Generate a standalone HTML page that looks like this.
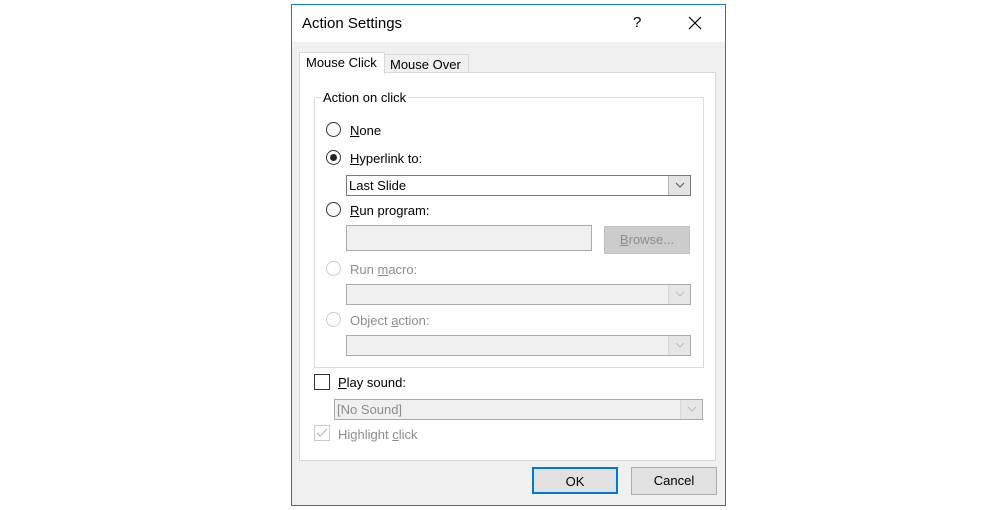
<!DOCTYPE html>
<html><head><meta charset="utf-8"><style>
*{box-sizing:border-box;margin:0;padding:0}
body{width:1000px;height:510px;background:#fff;position:relative;font-family:"Liberation Sans",sans-serif;font-size:13px;color:#000;overflow:hidden}
.a{position:absolute}
.dlg{left:291px;top:4px;width:435px;height:502px;border:1px solid #1979ca;background:#f0f0f0}
.title{left:292px;top:5px;width:433px;height:37px;background:#fff}
.rad{width:15px;height:15px;border:1px solid #333;border-radius:50%;background:#fff}
.rad.d{border-color:#ccc}
.lbl{white-space:nowrap;line-height:15px}
.g{color:#8d8d8d}
u{text-decoration:underline}
.combo{border:1px solid #7a7a7a;background:#fff;height:21px}
.combo.d{border-color:#cfcfcf;background:#f0f0f0}
.arr{position:absolute;right:0;top:0;width:22px;height:100%;background:#e3e3e3;border-left:1px solid #b5b5b5}
.arr.d{background:#e6e6e6;border-left-color:#d6d6d6}
.arr svg{position:absolute;left:6px;top:6px}
.btn{background:#e1e1e1;border:1px solid #adadad;text-align:center;line-height:26px;font-size:13px}
</style></head><body>
<div class="a dlg"></div>
<div class="a title"></div>
<div class="a" style="left:302px;top:15px;font-size:15px">Action Settings</div>
<div class="a" style="left:633px;top:14px;font-size:15px">?</div>
<svg class="a" style="left:688px;top:16px" width="14" height="14"><path d="M1 1L13 13M13 1L1 13" stroke="#000" stroke-width="1.2"/></svg>
<div class="a" style="left:384px;top:54px;width:85px;height:19px;background:#f0f0f0;border:1px solid #d9d9d9;border-bottom:none"></div>
<div class="a" style="left:390px;top:57px;font-size:13px">Mouse Over</div>
<div class="a" style="left:299px;top:72px;width:417px;height:389px;background:#fff;border:1px solid #d9d9d9"></div>
<div class="a" style="left:299px;top:52px;width:86px;height:22px;background:#fff;border:1px solid #d9d9d9;border-bottom:none"></div>
<div class="a" style="left:306px;top:55px;font-size:13px">Mouse Click</div>
<div class="a" style="left:314px;top:97px;width:390px;height:271px;border:1px solid #dcdcdc"></div>
<div class="a" style="left:321px;top:90px;background:#fff;padding:0 2px;font-size:13px">Action on click</div>

<div class="a rad" style="left:326px;top:122px"></div>
<div class="a lbl" style="left:350px;top:123px"><u>N</u>one</div>
<div class="a rad" style="left:326px;top:150px"></div>
<div class="a" style="left:330px;top:154px;width:7px;height:7px;border-radius:50%;background:#222"></div>
<div class="a lbl" style="left:350px;top:151px"><u>H</u>yperlink to:</div>
<div class="a combo" style="left:346px;top:175px;width:345px"><span style="position:absolute;left:2px;top:2px">Last Slide</span><div class="arr"><svg width="10" height="7"><path d="M1 1L5 5L9 1" fill="none" stroke="#555"/></svg></div></div>

<div class="a rad" style="left:326px;top:202px"></div>
<div class="a lbl" style="left:350px;top:203px"><u>R</u>un program:</div>
<div class="a" style="left:346px;top:225px;width:246px;height:26px;border:1px solid #aaa;background:#f0f0f0"></div>
<div class="a btn g" style="left:604px;top:226px;width:86px;height:28px;background:#ccc;border-color:#bfbfbf"><u>B</u>rowse...</div>

<div class="a rad d" style="left:326px;top:261px"></div>
<div class="a lbl g" style="left:350px;top:262px">Run <u>m</u>acro:</div>
<div class="a combo d" style="left:346px;top:284px;width:345px;border-color:#aaa"><div class="arr d"><svg width="10" height="7"><path d="M1 1L5 5L9 1" fill="none" stroke="#bbb"/></svg></div></div>

<div class="a rad d" style="left:326px;top:312px"></div>
<div class="a lbl g" style="left:350px;top:313px">Object <u>a</u>ction:</div>
<div class="a combo d" style="left:346px;top:335px;width:345px;border-color:#aaa"><div class="arr d"><svg width="10" height="7"><path d="M1 1L5 5L9 1" fill="none" stroke="#bbb"/></svg></div></div>

<div class="a" style="left:314px;top:374px;width:16px;height:16px;border:1px solid #333;background:#fff"></div>
<div class="a lbl" style="left:338px;top:375px"><u>P</u>lay sound:</div>
<div class="a combo d" style="left:334px;top:399px;width:369px;border-color:#aaa"><span class="g" style="position:absolute;left:2px;top:2px">[No Sound]</span><div class="arr d"><svg width="10" height="7"><path d="M1 1L5 5L9 1" fill="none" stroke="#bbb"/></svg></div></div>

<div class="a" style="left:314px;top:425px;width:16px;height:16px;border:1px solid #ccc;background:#fff"></div>
<svg class="a" style="left:316px;top:428px" width="12" height="10"><path d="M1 5L4 8L11 1" fill="none" stroke="#bbb" stroke-width="1.2"/></svg>
<div class="a lbl g" style="left:338px;top:427px">Highlight <u>c</u>lick</div>

<div class="a btn" style="left:532px;top:467px;width:86px;height:27px;border:2px solid #0078d7;line-height:25px">OK</div>
<div class="a btn" style="left:631px;top:467px;width:86px;height:28px">Cancel</div>
</body></html>
